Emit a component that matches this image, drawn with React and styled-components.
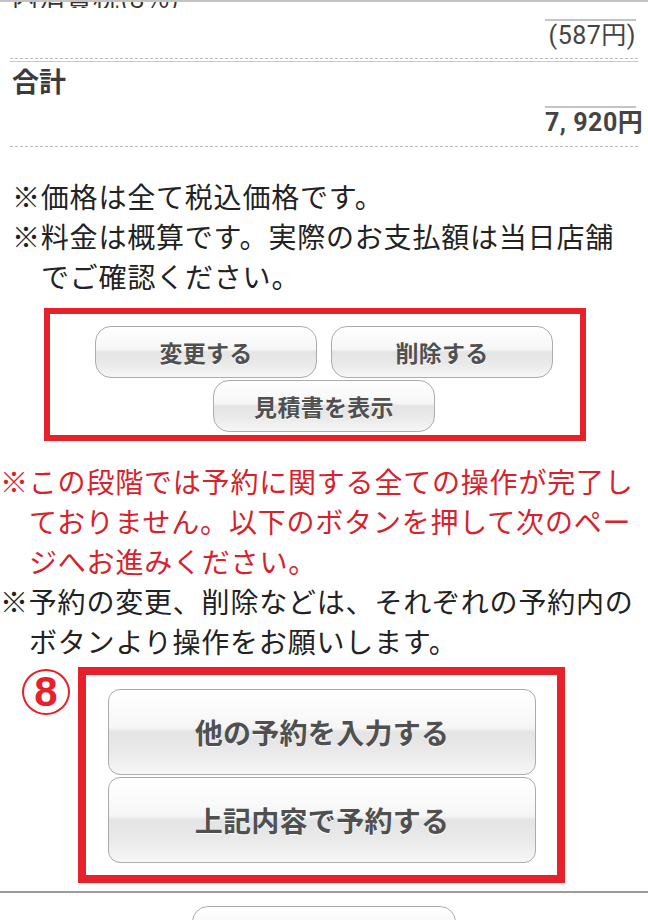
import React from "react";
import styled, { createGlobalStyle } from "styled-components";

const Global = createGlobalStyle`
  html, body { margin: 0; padding: 0; background: #fff; }
  body { font-family: "Noto Sans CJK JP", "Noto Sans", sans-serif; color: #333; }
  * { box-sizing: border-box; }
`;

const Page = styled.div`
  width: 648px;
  height: 920px;
  overflow: hidden;
  border-top: 2px solid #c4c4c4;
`;

const CutRow = styled.div`
  height: 6px;
  overflow: hidden;
  display: flex;
  align-items: flex-end;
  padding-left: 12px;
  font-size: 26px;
  line-height: 26px;
  color: #333;
  letter-spacing: 1px;
`;

const CutText = styled.span`
  display: block;
  margin-bottom: -2px;
`;

const Section = styled.div`
  margin: 0 10px;
  border-bottom: 1px dashed #bdbdbd;
  ${(p) => p.$topRule && "border-top: 1px solid #c8c8c8;"}
  ${(p) => p.$topRule && "margin-top: 2px;"}
`;

const ValueRow = styled.div`
  display: flex;
  justify-content: flex-end;
  padding: ${(p) => p.$pad};
`;

const Value = styled.div`
  width: 91px;
  margin-right: 2px;
  border-top: 2px solid #c4c4c4;
  text-align: right;
  font-family: "Roboto", "Noto Sans CJK JP", sans-serif;
  font-size: 25px;
  line-height: 30px;
  letter-spacing: ${(p) => (p.$bold ? "0.5px" : "0.5px")};
  color: #444;
  font-weight: ${(p) => (p.$bold ? 700 : 400)};
  white-space: nowrap;
`;

const Label = styled.div`
  padding: 1px 2px 0;
  font-size: 27px;
  line-height: 36px;
  font-weight: 700;
  color: #3a3a3a;
`;

const Notes = styled.div`
  padding: 29px 24px 0 12px;
`;

const Note = styled.div`
  font-size: 28px;
  line-height: 40px;
  letter-spacing: 0.8px;
  padding-left: 29px;
  text-indent: -29px;
  color: ${(p) => (p.$red ? "#d7222c" : "#222")};
`;

const Warnings = styled.div`
  padding: 20px 0 0 0;
`;

const RedBox = styled.div`
  border: ${(p) => p.$w}px solid #e62129;
  width: ${(p) => p.$width}px;
  padding: ${(p) => p.$pad};
`;

const FirstBoxWrap = styled.div`
  padding: 12px 0 0 44px;
`;

const SmallButtons = styled.div`
  display: flex;
  flex-wrap: wrap;
  justify-content: center;
  gap: 2px 14px;
  width: 460px;
`;

const GlossButton = styled.button`
  width: ${(p) => p.$w}px;
  height: ${(p) => p.$h}px;
  border: 1.5px solid #ababab;
  border-radius: ${(p) => p.$r}px;
  background: linear-gradient(
    to bottom,
    #ffffff 0%,
    #f6f6f6 45%,
    #e4e4e4 50%,
    #eaeaea 75%,
    #f7f7f7 100%
  );
  box-shadow: inset 0 1px 0 #fff;
  font-family: "Noto Sans CJK JP", sans-serif;
  font-weight: 700;
  font-size: ${(p) => p.$fs}px;
  letter-spacing: 0.3px;
  color: #505050;
  text-shadow: 0 1px 0 #fff;
  padding: 0;
  cursor: pointer;
`;

const ActionRow = styled.div`
  display: flex;
  align-items: flex-start;
  padding: 6px 0 0 22px;
  gap: 8px;
`;

const Circled = styled.div`
  width: 48px;
  height: 46px;
  margin-top: 2px;
  border: 2px solid #e62129;
  border-radius: 50%;
  color: #e62129;
  font-family: "Liberation Sans", Arial, sans-serif;
  font-weight: 700;
  font-size: 42px;
  line-height: 42px;
  text-align: center;
`;

const BigButtons = styled.div`
  display: flex;
  flex-direction: column;
  gap: 2px;
`;

const Divider = styled.div`
  margin-top: 8px;
  border-top: 2px solid #9c9c9c;
`;

const BottomRow = styled.div`
  display: flex;
  justify-content: center;
  padding-top: 13px;
`;

export default function App() {
  return (
    <Page>
      <Global />
      <CutRow>
        <CutText>内消費税(8%)</CutText>
      </CutRow>
      <Section>
        <ValueRow $pad="11px 0 7px">
          <Value>(587円)</Value>
        </ValueRow>
      </Section>
      <Section $topRule>
        <Label>合計</Label>
        <ValueRow $pad="7px 0 8px">
          <Value $bold>7, 920円</Value>
        </ValueRow>
      </Section>
      <Notes>
        <Note>※価格は全て税込価格です。</Note>
        <Note>※料金は概算です。実際のお支払額は当日店舗でご確認ください。</Note>
      </Notes>
      <FirstBoxWrap>
        <RedBox $w={6} $width={542} $pad="12px 0 3px 44px">
          <SmallButtons>
            <GlossButton $w={222} $h={52} $r={16} $fs={23}>変更する</GlossButton>
            <GlossButton $w={222} $h={52} $r={16} $fs={23}>削除する</GlossButton>
            <GlossButton $w={222} $h={52} $r={16} $fs={23}>見積書を表示</GlossButton>
          </SmallButtons>
        </RedBox>
      </FirstBoxWrap>
      <Warnings>
        <Note $red>※この段階では予約に関する全ての操作が完了しておりません。以下のボタンを押して次のページへお進みください。</Note>
        <Note>※予約の変更、削除などは、それぞれの予約内のボタンより操作をお願いします。</Note>
      </Warnings>
      <ActionRow>
        <Circled>8</Circled>
        <RedBox $w={8} $width={487} $pad="14px 0 12px 22px">
          <BigButtons>
            <GlossButton $w={428} $h={86} $r={12} $fs={28}>他の予約を入力する</GlossButton>
            <GlossButton $w={428} $h={86} $r={12} $fs={28}>上記内容で予約する</GlossButton>
          </BigButtons>
        </RedBox>
      </ActionRow>
      <Divider />
      <BottomRow>
        <GlossButton $w={264} $h={52} $r={16} $fs={23} />
      </BottomRow>
    </Page>
  );
}
